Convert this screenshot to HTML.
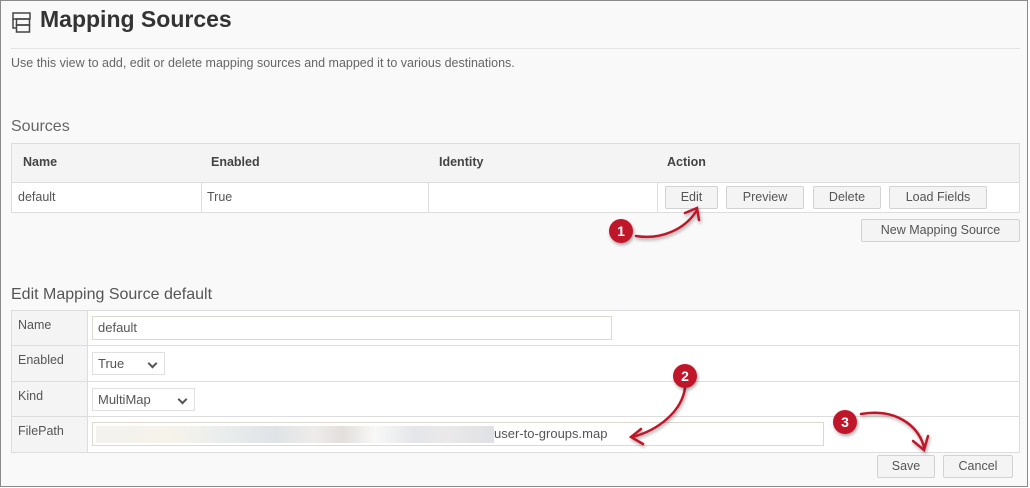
<!DOCTYPE html>
<html><head><style>
*{box-sizing:border-box;margin:0;padding:0}
body{width:1030px;height:488px;background:#fff;font-family:"Liberation Sans",sans-serif;position:relative;overflow:hidden;color:#444}
#frame{position:absolute;left:0;top:0;width:1028px;height:487px;border:1px solid #8a8a8a;background:#f9f9f9}
.a{position:absolute}
.btn{position:absolute;background:#f4f4f4;border:1px solid #d2d2d2;border-radius:2px;font-size:12.5px;color:#555;text-align:center;line-height:21px;height:23px}
.inp{position:absolute;background:#fff;border:1px solid #ddd8d0;font-size:13px;color:#555;padding-left:5px;line-height:22px;height:24px}
.lbl{position:absolute;left:18px;font-size:12.5px;color:#555}
.sel:after{content:"";position:absolute;right:8px;top:7px;width:5px;height:5px;border-right:2px solid #555;border-bottom:2px solid #555;transform:rotate(45deg)}
</style></head><body>
<div id="frame"></div>
<svg class="a" style="left:12px;top:12px" width="20" height="22" viewBox="0 0 20 22"><g fill="none" stroke="#444" stroke-width="1.5"><rect x="1" y="1" width="17" height="6"/><rect x="4.5" y="7" width="13" height="6"/><rect x="4.5" y="13" width="13" height="7"/><path d="M1 7v9h3.5"/></g></svg>
<div class="a" style="left:40px;top:6px;font-size:23px;font-weight:bold;color:#333">Mapping Sources</div>
<div class="a" style="left:11px;top:48px;width:1009px;height:1px;background:#e4e4e4"></div>
<div class="a" style="left:11px;top:56px;font-size:12.5px;color:#666">Use this view to add, edit or delete mapping sources and mapped it to various destinations.</div>
<div class="a" style="left:11px;top:118px;font-size:16px;color:#666">Sources</div>
<div class="a" style="left:11px;top:143px;width:1009px;height:70px;border:1px solid #ddd;background:#fff">
 <div class="a" style="left:0;top:0;width:1007px;height:39px;background:#f4f4f4;border-bottom:1px solid #ddd"></div>
 <div class="a" style="left:11px;top:11px;font-size:12.5px;font-weight:bold;color:#444">Name</div>
 <div class="a" style="left:199px;top:11px;font-size:12.5px;font-weight:bold;color:#444">Enabled</div>
 <div class="a" style="left:427px;top:11px;font-size:12.5px;font-weight:bold;color:#444">Identity</div>
 <div class="a" style="left:655px;top:11px;font-size:12.5px;font-weight:bold;color:#444">Action</div>
 <div class="a" style="left:189px;top:39px;width:1px;height:30px;background:#ddd"></div>
 <div class="a" style="left:416px;top:39px;width:1px;height:30px;background:#ddd"></div>
 <div class="a" style="left:645px;top:39px;width:1px;height:30px;background:#ddd"></div>
 <div class="a" style="left:6px;top:46px;font-size:12.5px;color:#555">default</div>
 <div class="a" style="left:195px;top:46px;font-size:12.5px;color:#555">True</div>
</div>
<div class="btn" style="left:665px;top:186px;width:53px">Edit</div>
<div class="btn" style="left:726px;top:186px;width:78px">Preview</div>
<div class="btn" style="left:813px;top:186px;width:68px">Delete</div>
<div class="btn" style="left:889px;top:186px;width:98px">Load Fields</div>
<div class="btn" style="left:861px;top:219px;width:159px">New Mapping Source</div>
<div class="a" style="left:11px;top:286px;font-size:16px;color:#555">Edit Mapping Source default</div>
<div class="a" style="left:11px;top:310px;width:1009px;height:143px;border:1px solid #ddd;background:#fff">
 <div class="a" style="left:0;top:0;width:76px;height:141px;background:#f4f4f4;border-right:1px solid #ddd"></div>
 <div class="a" style="left:0;top:34px;width:1007px;height:1px;background:#ddd"></div>
 <div class="a" style="left:0;top:70px;width:1007px;height:1px;background:#ddd"></div>
 <div class="a" style="left:0;top:105px;width:1007px;height:1px;background:#ddd"></div>
</div>
<div class="lbl" style="top:318px">Name</div>
<div class="lbl" style="top:353px">Enabled</div>
<div class="lbl" style="top:389px">Kind</div>
<div class="lbl" style="top:424px">FilePath</div>
<div class="inp" style="left:92px;top:316px;width:520px">default</div>
<div class="inp sel" style="left:92px;top:352px;width:73px;height:23px;border-color:#e0e0e0">True</div>
<div class="inp sel" style="left:92px;top:388px;width:103px;height:23px;border-color:#e0e0e0">MultiMap</div>
<div class="inp" style="left:92px;top:422px;width:732px"></div>
<div class="a" style="left:96px;top:426px;width:398px;height:17px;background:linear-gradient(90deg,#f3f2ef 0,#f6f3ea 18%,#eceeee 30%,#e0e3e6 45%,#eeeceb 55%,#e2dfdd 62%,#f8f8f7 70%,#e4e6ea 80%,#ebe9ea 88%,#dfe1e5 100%)"></div>
<div class="a" style="left:494px;top:426px;font-size:13px;color:#555">user-to-groups.map</div>
<div class="btn" style="left:877px;top:455px;width:58px">Save</div>
<div class="btn" style="left:943px;top:455px;width:70px">Cancel</div>
<svg class="a" style="left:0;top:0" width="1030" height="488">
<defs><filter id="s"><feDropShadow dx="1" dy="2" stdDeviation="1.5" flood-opacity="0.35"/></filter></defs>
<g fill="none" stroke="#c0182a" stroke-width="2.5" stroke-linecap="round" filter="url(#s)">
<path d="M636 236 C660 240 685 230 697 210"/><path d="M685 213 L697 208 L699 220"/>
<path d="M685 388 C682 410 660 430 632 437"/><path d="M641 429 L631 437 L643 444"/>
<path d="M861 414 C895 408 918 425 924 447"/><path d="M913 441 L924 450 L928 436"/>
</g>
<g filter="url(#s)"><circle cx="621" cy="231" r="12" fill="#c0182a"/><circle cx="685" cy="376" r="12" fill="#c0182a"/><circle cx="845" cy="422" r="12" fill="#c0182a"/></g>
<g fill="#fff" font-family="Liberation Sans" font-weight="bold" font-size="14" text-anchor="middle"><text x="621" y="236">1</text><text x="685" y="381">2</text><text x="845" y="427">3</text></g>
</svg>
</body></html>
